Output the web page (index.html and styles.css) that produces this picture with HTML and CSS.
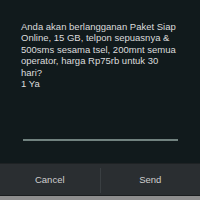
FILE: index.html
```html
<!DOCTYPE html>
<html>
<head>
<meta charset="utf-8">
<link rel="stylesheet" href="styles.css">
</head>
<body>
<div class="dialog">
  <div class="message">Anda akan berlangganan Paket Siap Online, 15 GB, telpon sepuasnya &amp; 500sms sesama tsel, 200mnt semua operator, harga Rp75rb untuk 30 hari?<br>1 Ya</div>
  <div class="input"><div class="input-line"></div></div>
  <div class="buttons">
    <div class="btn">Cancel</div>
    <div class="sep"></div>
    <div class="btn">Send</div>
  </div>
  <div class="bottom"></div>
</div>
</body>
</html>
```

FILE: styles.css
```css
html, body {
  margin: 0;
  padding: 0;
  background: #111a1c;
}
.dialog {
  width: 200px;
  height: 200px;
  display: flex;
  flex-direction: column;
  font-family: "Liberation Sans", Arial, sans-serif;
}
.message {
  padding: 21px 19px 0 21px;
  color: #dcdcdc;
  font-size: 9.5px;
  line-height: 11.4px;
}
.input {
  margin-top: auto;
  padding: 0 22px 0 23px;
  height: 2px;
}
.input-line {
  height: 2px;
  background: #71827f;
}
.buttons {
  margin-top: 22px;
  height: 31px;
  display: flex;
  background: #2a2e31;
  border-top: 1px solid #1e2224;
  border-bottom: 1px solid #1a1d1f;
}
.btn {
  flex: 1;
  display: flex;
  align-items: center;
  justify-content: center;
  color: #cfcfcf;
  font-size: 9.5px;
}
.sep {
  width: 1px;
  margin: 4px 0 2px;
  background: #3a3f42;
}
.bottom {
  height: 4px;
  background: #8e8e8e;
}
```
